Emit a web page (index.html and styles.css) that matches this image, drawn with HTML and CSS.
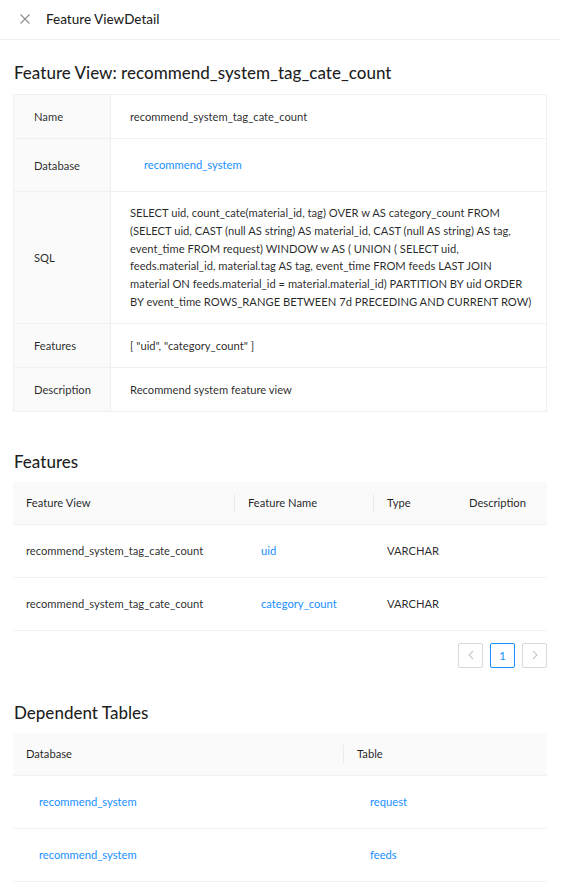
FILE: index.html
```html
<!DOCTYPE html>
<html>
<head>
<meta charset="utf-8">
<link rel="stylesheet" href="styles.css">
</head>
<body>
<div class="drawer">
  <div class="drawer-header">
    <span class="close">
      <svg width="10" height="10" viewBox="0 0 10 10"><path d="M0.5 0.5L9.5 9.5M9.5 0.5L0.5 9.5" stroke="#8c8c8c" stroke-width="1.1" fill="none"/></svg>
    </span>
    <span class="drawer-title">Feature ViewDetail</span>
  </div>
  <div class="drawer-body">
    <h2 class="page-title">Feature View: recommend_system_tag_cate_count</h2>
    <table class="desc">
      <colgroup><col class="desc-label-col"><col></colgroup>
      <tr><th>Name</th><td>recommend_system_tag_cate_count</td></tr>
      <tr><th>Database</th><td><a class="link-btn">recommend_system</a></td></tr>
      <tr><th>SQL</th><td class="sql">SELECT uid, count_cate(material_id, tag) OVER w AS category_count FROM<br>(SELECT uid, CAST (null AS string) AS material_id, CAST (null AS string) AS tag,<br>event_time FROM request) WINDOW w AS ( UNION ( SELECT uid,<br>feeds.material_id, material.tag AS tag, event_time FROM feeds LAST JOIN<br>material ON feeds.material_id = material.material_id) PARTITION BY uid ORDER<br>BY event_time ROWS_RANGE BETWEEN 7d PRECEDING AND CURRENT ROW)</td></tr>
      <tr><th>Features</th><td>[ "uid", "category_count" ]</td></tr>
      <tr><th>Description</th><td>Recommend system feature view</td></tr>
    </table>

    <h3 class="section-title features-title">Features</h3>
    <table class="grid">
      <colgroup><col class="fc1"><col class="fc2"><col class="fc3"><col></colgroup>
      <thead>
        <tr><th class="div">Feature View</th><th class="div">Feature Name</th><th>Type</th><th>Description</th></tr>
      </thead>
      <tbody>
        <tr><td>recommend_system_tag_cate_count</td><td><a class="link-btn">uid</a></td><td>VARCHAR</td><td></td></tr>
        <tr><td>recommend_system_tag_cate_count</td><td><a class="link-btn">category_count</a></td><td>VARCHAR</td><td></td></tr>
      </tbody>
    </table>
    <div class="pager">
      <span class="pg pg-disabled"><svg width="8" height="10" viewBox="0 0 8 10"><path d="M6 1L2 5L6 9" stroke="#c8c8c8" stroke-width="1.1" fill="none"/></svg></span>
      <span class="pg pg-active">1</span>
      <span class="pg pg-disabled"><svg width="8" height="10" viewBox="0 0 8 10"><path d="M2 1L6 5L2 9" stroke="#c8c8c8" stroke-width="1.1" fill="none"/></svg></span>
    </div>

    <h3 class="section-title dep-title">Dependent Tables</h3>
    <table class="grid">
      <colgroup><col class="dc1"><col></colgroup>
      <thead>
        <tr><th class="div">Database</th><th>Table</th></tr>
      </thead>
      <tbody>
        <tr><td><a class="link-btn">recommend_system</a></td><td><a class="link-btn">request</a></td></tr>
        <tr><td><a class="link-btn">recommend_system</a></td><td><a class="link-btn">feeds</a></td></tr>
      </tbody>
    </table>
  </div>
</div>
</body>
</html>
```
FILE: styles.css
```css
* { box-sizing: border-box; }
html, body { margin: 0; padding: 0; background: #fff; }
body {
  font-family: "Lato", "Open Sans", sans-serif;
  font-size: 11.2px;
  color: rgba(0, 0, 0, 0.85);
}
.drawer-header {
  height: 40px;
  border-bottom: 1px solid #f0f0f0;
  display: flex;
  align-items: center;
  padding-left: 20px;
}
.close {
  display: flex;
  width: 10px;
  height: 10px;
  margin-right: 16px;
  margin-top: -1px;
}
.drawer-title {
  font-size: 13.5px;
  font-weight: 500;
  color: rgba(0, 0, 0, 0.88);
  margin-top: -2px;
}
.drawer-body {
  padding: 0 14px 0 13px;
}
.page-title {
  margin: 0;
  padding: 21px 0 9px 1px;
  font-size: 17px;
  line-height: 24px;
  font-weight: 500;
  color: rgba(0, 0, 0, 0.88);
}
.desc {
  width: 100%;
  border-collapse: collapse;
  table-layout: fixed;
  border: 1px solid #f0f0f0;
}
.desc-label-col { width: 97px; }
.desc th, .desc td {
  border: 1px solid #f0f0f0;
  padding: 12px 20px;
  line-height: 19px;
  text-align: left;
  font-weight: 400;
  vertical-align: middle;
}
.desc td { padding-left: 19px; }
.desc th { background: #fafafa; }
.desc td.sql { line-height: 17.8px; white-space: nowrap; }
.link-btn {
  display: inline-block;
  height: 28px;
  line-height: 28px;
  padding: 0 13px;
  color: #1890ff;
  text-decoration: none;
}
.desc .link-btn { margin-left: 1px; }
.section-title {
  margin: 0;
  font-size: 17px;
  line-height: 24px;
  font-weight: 500;
  color: rgba(0, 0, 0, 0.88);
  padding-left: 1px;
}
.features-title { margin-top: 38px; margin-bottom: 8px; }
.dep-title { margin-top: 33px; margin-bottom: 8px; }
.grid {
  width: 100%;
  border-collapse: collapse;
  table-layout: fixed;
}
.fc1 { width: 222px; }
.fc2 { width: 139px; }
.fc3 { width: 82px; }
.dc1 { width: 331px; }
.grid th {
  position: relative;
  background: #fafafa;
  text-align: left;
  font-weight: 400;
  color: rgba(0, 0, 0, 0.88);
  padding: 12px 13px;
  line-height: 18px;
  border-bottom: 1px solid #f0f0f0;
}
.grid th.div::after {
  content: "";
  position: absolute;
  right: 0;
  top: 50%;
  width: 1px;
  height: 18px;
  transform: translateY(-50%);
  background: rgba(0, 0, 0, 0.06);
}
.grid td {
  padding: 12px 13px;
  line-height: 28px;
  border-bottom: 1px solid #f0f0f0;
  white-space: nowrap;
}
.pager {
  display: flex;
  justify-content: flex-end;
  gap: 7px;
  margin-top: 12px;
}
.pg {
  width: 25px;
  height: 25px;
  border: 1px solid #d9d9d9;
  border-radius: 2px;
  display: flex;
  align-items: center;
  justify-content: center;
  font-size: 12px;
  background: #fff;
}
.pg-active {
  border-color: #1890ff;
  color: #1890ff;
}
```
